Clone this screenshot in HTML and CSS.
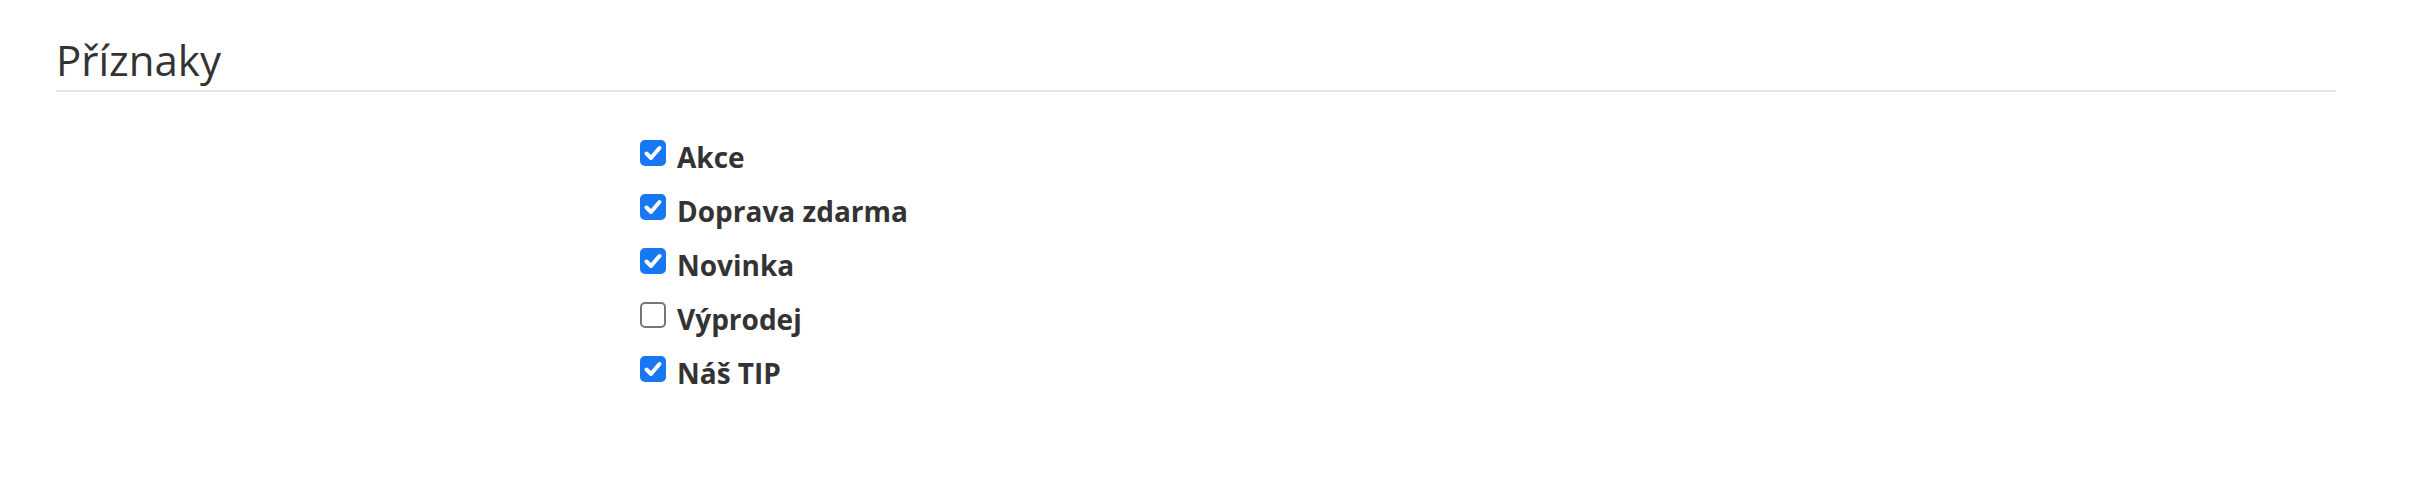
FILE: index.html
```html
<!DOCTYPE html>
<html lang="cs">
  <head>
    <meta charset="UTF-8" />
    <meta name="viewport" content="width=device-width, initial-scale=1.0" />
    <title>Příznaky</title>
    <link rel="stylesheet" href="styles.css">
  </head>
  <body>
    <section class="flags">
      <h2 class="flags-title">Příznaky</h2>

      <div class="flags-list">
        <label class="flag">
          <input type="checkbox" checked />
          <span>Akce</span>
        </label>
        <label class="flag">
          <input type="checkbox" checked />
          <span>Doprava zdarma</span>
        </label>
        <label class="flag">
          <input type="checkbox" checked />
          <span>Novinka</span>
        </label>
        <label class="flag">
          <input type="checkbox" />
          <span>Výprodej</span>
        </label>
        <label class="flag">
          <input type="checkbox" checked />
          <span>Náš TIP</span>
        </label>
      </div>
    </section>
  </body>
</html>
```

FILE: styles.css
```css
body {
  font-family: "Open Sans", "Liberation Sans", sans-serif;
  margin: 0;
  padding: 0;
  color: #333;
  background: #fff;
}

.flags {
  padding: 0 76px 0 56px;
}

.flags-title {
  margin: 35px 0 0 0;
  padding-bottom: 5px;
  font-size: 42px;
  font-weight: 400;
  line-height: 50px;
  color: #333;
  border-bottom: 2px solid #e3e3e3;
}

.flags-list {
  margin-top: 38px;
  padding-left: 584px;
  display: flex;
  flex-direction: column;
}

.flag {
  display: flex;
  align-items: flex-start;
  gap: 11px;
  font-size: 28px;
  font-weight: 700;
  line-height: 54px;
  color: #333;
  cursor: pointer;
}

.flag input[type="checkbox"] {
  appearance: none;
  -webkit-appearance: none;
  width: 26px;
  height: 26px;
  margin: 10px 0 0 0;
  border: 2px solid #767676;
  border-radius: 5px;
  background-color: #fff;
  flex-shrink: 0;
}

.flag input[type="checkbox"]:checked {
  border-color: #1877f2;
  background-color: #1877f2;
  background-image: url("data:image/svg+xml,%3Csvg xmlns='http://www.w3.org/2000/svg' viewBox='0 0 26 26'%3E%3Cpath d='M6.5 13.5l4.5 4.5 8.5-10' fill='none' stroke='%23fff' stroke-width='4' stroke-linecap='round' stroke-linejoin='round'/%3E%3C/svg%3E");
  background-position: center;
  background-size: 26px 26px;
  background-repeat: no-repeat;
}
```
